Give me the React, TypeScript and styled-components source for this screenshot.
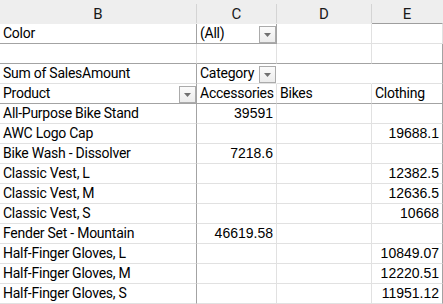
import React from 'react';
import styled, { createGlobalStyle } from 'styled-components';

const DARK = '#a3a3a3';
const LIGHT = '#e1e1e1';
const NONE = 'transparent';

const GlobalStyle = createGlobalStyle`
  html, body {
    margin: 0;
    padding: 0;
    background: #ffffff;
    overflow: hidden;
  }
  body {
    font-family: 'Liberation Sans', Arial, sans-serif;
    color: #000000;
  }
`;

const Sheet = styled.div`
  display: flex;
  flex-direction: column;
  width: 443px;
  height: 304px;
  overflow: hidden;
`;

const Row = styled.div<{ $h?: number }>`
  display: grid;
  grid-template-columns: 197px 80px 95px 71px;
  height: ${(p) => p.$h ?? 20}px;
`;

const HeaderCell = styled.div<{ $last?: boolean }>`
  box-sizing: border-box;
  display: flex;
  align-items: center;
  justify-content: center;
  padding-top: 4px;
  background: #eeeeee;
  border-bottom: 1px solid #9e9e9e;
  border-right: 1px solid transparent;
  border-image: ${(p) =>
    p.$last
      ? 'none'
      : 'linear-gradient(to bottom, transparent 4px, #d4d4d4 4px) 1'};
  border-image-slice: ${(p) => (p.$last ? 'initial' : '0 1 0 0')};
  font-family: Roboto, 'Liberation Sans', sans-serif;
  font-size: 15px;
  color: #1a1a1a;
`;

const Cell = styled.div<{
  $right?: string;
  $bottom?: string;
  $num?: boolean;
}>`
  box-sizing: border-box;
  display: flex;
  align-items: flex-end;
  justify-content: ${(p) => (p.$num ? 'flex-end' : 'space-between')};
  padding: 0 ${(p) => (p.$num ? 3 : 0)}px 2px 3px;
  border-right: 1px solid ${(p) => p.$right ?? LIGHT};
  border-bottom: 1px solid ${(p) => p.$bottom ?? LIGHT};
  font-size: 14px;
  line-height: 16px;
  white-space: nowrap;
  overflow: hidden;
`;

const Label = styled.span`
  font-family: Roboto, 'Liberation Sans', sans-serif;
  font-size: 14px;
  letter-spacing: -0.25px;
`;

const FilterButton = styled.span`
  box-sizing: border-box;
  display: flex;
  align-items: center;
  justify-content: center;
  flex: none;
  width: 17px;
  height: 17px;
  margin-bottom: -2px;
  border: 1px solid #ababab;
  background: linear-gradient(#fbfbfb, #ececec);
`;

function Dropdown() {
  return (
    <FilterButton>
      <svg width="7" height="4" viewBox="0 0 7 4">
        <path d="M0 0 H7 L3.5 4 Z" fill="#707070" />
      </svg>
    </FilterButton>
  );
}

const rows: [string, string, string, string][] = [
  ['All-Purpose Bike Stand', '39591', '', ''],
  ['AWC Logo Cap', '', '', '19688.1'],
  ['Bike Wash - Dissolver', '7218.6', '', ''],
  ['Classic Vest, L', '', '', '12382.5'],
  ['Classic Vest, M', '', '', '12636.5'],
  ['Classic Vest, S', '', '', '10668'],
  ['Fender Set - Mountain', '46619.58', '', ''],
  ['Half-Finger Gloves, L', '', '', '10849.07'],
  ['Half-Finger Gloves, M', '', '', '12220.51'],
  ['Half-Finger Gloves, S', '', '', '11951.12'],
];

export default function App() {
  return (
    <>
      <GlobalStyle />
      <Sheet>
        <Row $h={24}>
          <HeaderCell>B</HeaderCell>
          <HeaderCell>C</HeaderCell>
          <HeaderCell>D</HeaderCell>
          <HeaderCell $last>E</HeaderCell>
        </Row>

        <Row>
          <Cell $right={DARK} $bottom={DARK}>
            <Label>Color</Label>
          </Cell>
          <Cell $right={DARK} $bottom={DARK}>
            <Label>(All)</Label>
            <Dropdown />
          </Cell>
          <Cell />
          <Cell />
        </Row>

        <Row>
          <Cell $bottom={DARK} />
          <Cell $bottom={DARK} />
          <Cell $bottom={DARK} />
          <Cell $bottom={DARK} $right={DARK} />
        </Row>

        <Row>
          <Cell $right={DARK}>
            <Label>Sum of SalesAmount</Label>
          </Cell>
          <Cell $right={NONE}>
            <Label>Category</Label>
            <Dropdown />
          </Cell>
          <Cell $right={NONE} />
          <Cell $right={DARK} />
        </Row>

        <Row>
          <Cell $right={DARK} $bottom={DARK}>
            <Label>Product</Label>
            <Dropdown />
          </Cell>
          <Cell $bottom={DARK}>
            <Label>Accessories</Label>
          </Cell>
          <Cell $bottom={DARK}>
            <Label>Bikes</Label>
          </Cell>
          <Cell $bottom={DARK} $right={DARK}>
            <Label>Clothing</Label>
          </Cell>
        </Row>

        {rows.map(([name, acc, bikes, cloth]) => (
          <Row key={name}>
            <Cell $right={DARK}>
              <Label>{name}</Label>
            </Cell>
            <Cell $num>{acc}</Cell>
            <Cell $num>{bikes}</Cell>
            <Cell $num $right={DARK}>
              {cloth}
            </Cell>
          </Row>
        ))}
      </Sheet>
    </>
  );
}
